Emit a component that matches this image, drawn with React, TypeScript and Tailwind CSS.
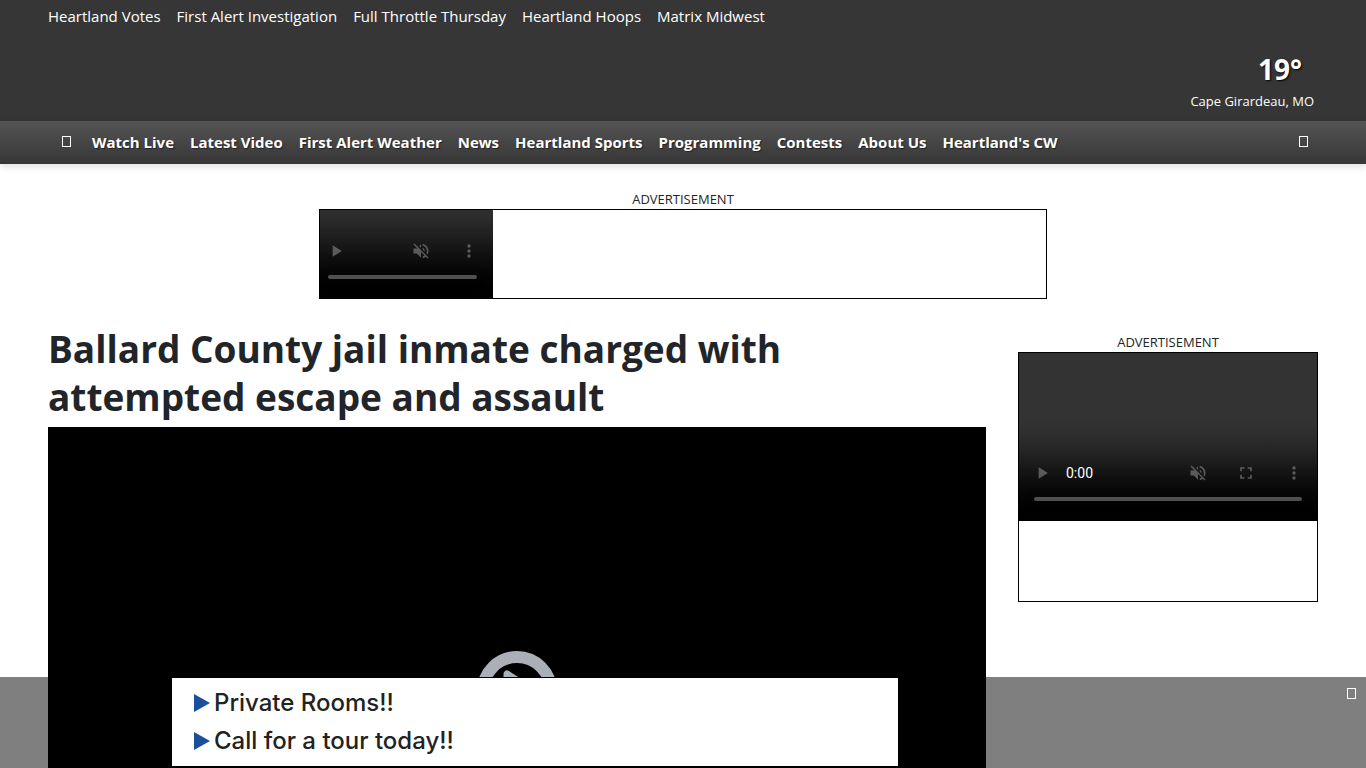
const topLinks = [
  "Heartland Votes",
  "First Alert Investigation",
  "Full Throttle Thursday",
  "Heartland Hoops",
  "Matrix Midwest",
]

const navLinks = [
  "Watch Live",
  "Latest Video",
  "First Alert Weather",
  "News",
  "Heartland Sports",
  "Programming",
  "Contests",
  "About Us",
  "Heartland's CW",
]

const bannerLines = ["Private Rooms!!", "Call for a tour today!!"]

function GlyphButton({ label }: { label: string }) {
  return (
    <button type="button" aria-label={label} className="flex p-1">
      <span className="block w-[9px] h-[11px] border border-white" />
    </button>
  )
}

function Header() {
  return (
    <header className="bg-[#363636] text-white">
      <div className="flex flex-col px-12">
        <nav aria-label="Featured" className="flex gap-4 pt-1 text-[15px] leading-6">
          {topLinks.map((text) => (
            <a key={text} href="#">{text}</a>
          ))}
        </nav>
        <a href="#" className="self-end mt-5 pr-1 pb-2 text-right">
          <span className="block pr-3 text-[28px] leading-[42px] font-bold [text-shadow:1px_1px_2px_#000]">19°</span>
          <span className="block text-[13px] leading-[23px]">Cape Girardeau, MO</span>
        </a>
      </div>
      <div className="flex items-center justify-between h-[43px] px-12 pb-[2px] bg-linear-to-b from-[#545454] to-[#373737] shadow-[0_2px_8px_rgba(0,0,0,0.15)]">
        <div className="flex items-center pl-[10px]">
          <GlyphButton label="Menu" />
          <nav aria-label="Main" className="flex gap-4 ml-[17px] text-[15px] leading-6 font-bold [text-shadow:1px_1px_1px_#222]">
            {navLinks.map((text) => (
              <a key={text} href="#">{text}</a>
            ))}
          </nav>
        </div>
        <div className="pr-[6px]">
          <GlyphButton label="Search" />
        </div>
      </div>
    </header>
  )
}

function PlayerBadge() {
  return (
    <svg viewBox="0 0 80 80" className="w-20 h-20" aria-hidden="true">
      <circle cx="40" cy="40" r="34" fill="none" stroke="#abafb7" strokeWidth="12" />
      <path d="M30 23 v34 l26 -17z" fill="#abafb7" stroke="#abafb7" strokeWidth="7" strokeLinejoin="round" />
    </svg>
  )
}

function StickyBanner() {
  return (
    <div className="fixed inset-x-0 bottom-0 flex justify-center h-[91px] pr-[296px] bg-black/50">
      <a href="#" className="flex flex-col gap-2 w-[728px] h-[90px] pl-[22px] pt-[10px] bg-white border border-black text-[#222] font-['Inter',sans-serif] text-[24px] leading-[30px] font-medium">
        {bannerLines.map((line) => (
          <span key={line} className="flex items-center gap-1">
            <svg viewBox="0 0 16 18" className="w-4 h-[18px]" aria-hidden="true">
              <path d="M0 0l16 9-16 9z" fill="#1b4f9c" />
            </svg>
            {line}
          </span>
        ))}
      </a>
      <div className="absolute top-[7px] right-[6px] text-white">
        <GlyphButton label="Close" />
      </div>
    </div>
  )
}

export default function App() {
  return (
    <div className="bg-white text-[#212529] font-['Open_Sans',sans-serif]">
      <Header />

      <div className="flex flex-col items-center pt-[25px] text-center">
        <p className="text-[13px] leading-5">ADVERTISEMENT</p>
        <div className="w-[728px] h-[90px] border border-black overflow-hidden">
          <video controls muted className="block w-[181px] max-w-none h-[89px] -ml-2 bg-black" />
        </div>
      </div>

      <div className="flex gap-8 px-12 pt-[26px]">
        <main className="flex-1">
          <h1 className="text-[37px] leading-12 font-bold">
            Ballard County jail inmate charged with attempted escape and assault
          </h1>
          <div className="flex items-center justify-center mt-[6px] aspect-video bg-black">
            <button type="button" aria-label="Play video">
              <PlayerBadge />
            </button>
          </div>
        </main>
        <aside className="w-[300px] pt-[7px]">
          <p className="text-[13px] leading-5 text-center">ADVERTISEMENT</p>
          <div className="h-[250px] border border-black overflow-hidden">
            <video controls muted className="block w-[300px] max-w-none h-[168px] -mx-px bg-black" />
          </div>
        </aside>
      </div>

      <StickyBanner />
    </div>
  )
}
